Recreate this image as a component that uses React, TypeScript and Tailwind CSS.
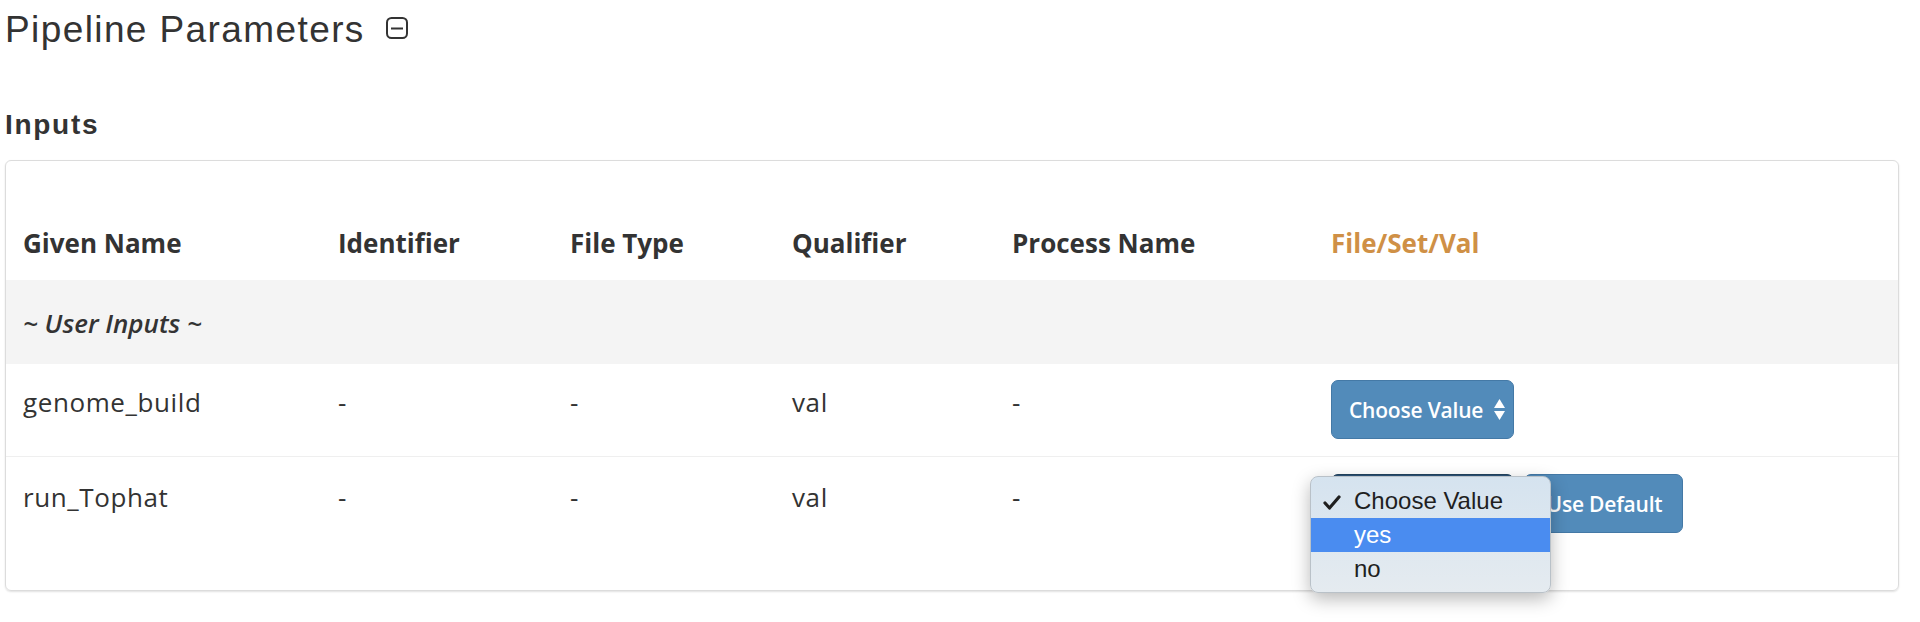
import React from "react";

const cols = "grid grid-cols-[315px_232px_222px_220px_319px_1fr]";

function Arrows() {
  return (
    <svg width="11" height="21" viewBox="0 0 11 21" className="block shrink-0">
      <polygon points="0,9 5.5,0 11,9" fill="white" />
      <polygon points="0,12 11,12 5.5,21" fill="white" />
    </svg>
  );
}

function ChooseBtn({ dark }: { dark?: boolean }) {
  return (
    <div
      className={
        "flex items-center h-[59px] w-[183px] pl-[17px] rounded-[7px] border text-white font-semibold text-[21px] whitespace-nowrap " +
        (dark ? "bg-[#2c5479] border-[#23445f]" : "bg-[#528bba] border-[#4479a6]")
      }
    >
      <span className="leading-[30px] w-[145px] shrink-0 tracking-[-0.2px]">Choose Value</span>
      <Arrows />
    </div>
  );
}

export default function App() {
  return (
    <div className="w-[1920px] h-[622px] bg-white overflow-hidden pl-[5px] text-[#333] font-['Liberation_Sans',Arial,sans-serif]">
      <div className="flex items-start mt-[8px]">
        <h1 className="text-[37px] leading-[44px] tracking-[1.4px] font-normal text-[#333]">Pipeline Parameters</h1>
        <svg width="22" height="22" viewBox="0 0 22 22" className="ml-[21px] mt-[9px]">
          <rect x="1" y="1" width="20" height="20" rx="4.5" fill="none" stroke="#333" strokeWidth="2" />
          <line x1="5" y1="11.5" x2="17" y2="11.5" stroke="#333" strokeWidth="2" />
        </svg>
      </div>
      <h2 className="mt-[57px] text-[28px] leading-[32px] font-bold tracking-[1.7px] text-[#333]">Inputs</h2>
      <div className="mt-[19px] w-[1894px] h-[431px] border border-[#dcdcdc] rounded-[6px] shadow-[0_1px_2px_rgba(0,0,0,0.12)] pt-[43px] font-['Open_Sans',sans-serif] text-[26px] text-[#333]">
        <div className={cols + " h-[76px] font-bold leading-[36px]"}>
          <div className="px-[17px] pt-[21px]">Given Name</div>
          <div className="px-[17px] pt-[21px]">Identifier</div>
          <div className="px-[17px] pt-[21px]">File Type</div>
          <div className="px-[17px] pt-[21px]">Qualifier</div>
          <div className="px-[17px] pt-[21px]">Process Name</div>
          <div className="px-[17px] pt-[21px] text-[#cf9046]">File/Set/Val</div>
        </div>
        <div className="h-[84px] bg-[#f4f4f4] px-[17px] pt-[25px] leading-[36px] italic font-semibold">~ User Inputs ~</div>
        <div className={cols + " h-[93px] border-b border-[#efefef] leading-[36px] tracking-[0.6px]"}>
          <div className="px-[17px] pt-[20px]">genome_build</div>
          <div className="px-[17px] pt-[20px]">-</div>
          <div className="px-[17px] pt-[20px]">-</div>
          <div className="px-[17px] pt-[20px]">val</div>
          <div className="px-[17px] pt-[20px]">-</div>
          <div className="px-[17px] pt-[16px] tracking-normal">
            <ChooseBtn />
          </div>
        </div>
        <div className={cols + " h-[93px] leading-[36px] tracking-[0.6px]"}>
          <div className="px-[17px] pt-[22px]">run_Tophat</div>
          <div className="px-[17px] pt-[22px]">-</div>
          <div className="px-[17px] pt-[22px]">-</div>
          <div className="px-[17px] pt-[22px]">val</div>
          <div className="px-[17px] pt-[22px]">-</div>
          <div className="px-[17px] pt-[17px] relative tracking-normal">
            <div className="flex items-start gap-[10px]">
              <ChooseBtn dark />
              <div className="h-[59px] w-[159px] flex items-center justify-center pl-[2px] rounded-[7px] border border-[#4479a6] bg-[#528bba] text-white font-semibold text-[21px] tracking-[-0.2px] whitespace-nowrap">
                Use Default
              </div>
            </div>
            <div className="absolute left-[-4px] top-[19px] w-[241px] h-[117px] rounded-[8px] border border-[#b9c1c8] bg-linear-to-b from-[#d5e3ef] to-[#e5ebf0] shadow-[0_6px_18px_rgba(0,0,0,0.28)] pt-[7px] font-['Liberation_Sans',Arial,sans-serif] text-[24px] text-[#1f1f1f] overflow-hidden">
              <div className="relative h-[34px] leading-[34px] pl-[43px]">
                <svg width="18" height="15" viewBox="0 0 18 15" className="absolute left-[12px] top-[11px]">
                  <path d="M2 8 L6.5 13 L16 2" fill="none" stroke="#1f1f1f" strokeWidth="3.2" strokeLinecap="round" strokeLinejoin="round" />
                </svg>
                Choose Value
              </div>
              <div className="h-[34px] leading-[34px] pl-[43px] bg-[#4a8cf0] text-white">yes</div>
              <div className="h-[34px] leading-[34px] pl-[43px]">no</div>
            </div>
          </div>
        </div>
      </div>
    </div>
  );
}
